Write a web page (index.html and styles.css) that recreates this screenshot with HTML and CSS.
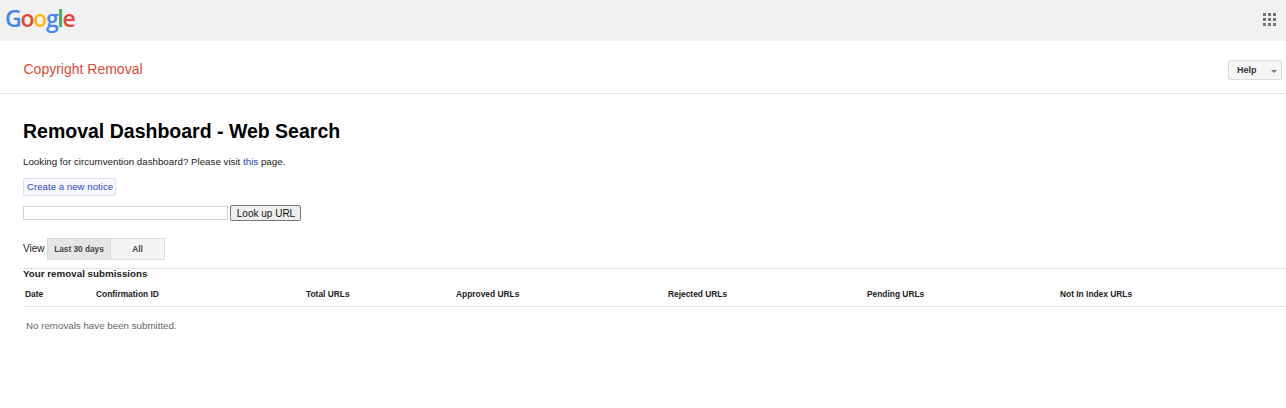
FILE: index.html
```html
<!DOCTYPE html>
<html lang="en">
<head>
<meta charset="utf-8">
<title>Removal Dashboard</title>
<link rel="stylesheet" href="styles.css">
</head>
<body>
<header class="topbar">
  <div class="logo"><span class="blue">G</span><span class="red">o</span><span class="yellow">o</span><span class="blue">g</span><span class="green">l</span><span class="red">e</span></div>
  <svg class="apps" width="13" height="13" viewBox="0 0 13 13" aria-hidden="true">
    <g fill="#757575">
      <rect x="0" y="0" width="3" height="3"/><rect x="5" y="0" width="3" height="3"/><rect x="10" y="0" width="3" height="3"/>
      <rect x="0" y="5" width="3" height="3"/><rect x="5" y="5" width="3" height="3"/><rect x="10" y="5" width="3" height="3"/>
      <rect x="0" y="10" width="3" height="3"/><rect x="5" y="10" width="3" height="3"/><rect x="10" y="10" width="3" height="3"/>
    </g>
  </svg>
</header>
<div class="subbar">
  <div class="product">Copyright Removal</div>
  <div class="help"><span>Help</span><i class="caret"></i></div>
</div>
<main class="content">
  <h1>Removal Dashboard - Web Search</h1>
  <p class="intro">Looking for circumvention dashboard? Please visit <a href="#">this</a> page.</p>
  <a class="notice" href="#">Create a new notice</a>
  <form class="lookup">
    <input class="url" type="text">
    <button class="lookbtn" type="button">Look up URL</button>
  </form>
  <div class="view">
    <span class="viewlabel">View</span>
    <div class="tabs">
      <div class="tab selected">Last 30 days</div>
      <div class="tab other">All</div>
    </div>
  </div>
  <h2>Your removal submissions</h2>
  <table class="subs">
    <colgroup>
      <col class="c1"><col class="c2"><col class="c3"><col class="c4"><col class="c5"><col class="c6"><col>
    </colgroup>
    <thead>
      <tr><th>Date</th><th>Confirmation ID</th><th>Total URLs</th><th>Approved URLs</th><th>Rejected URLs</th><th>Pending URLs</th><th>Not In Index URLs</th></tr>
    </thead>
  </table>
  <p class="empty">No removals have been submitted.</p>
</main>
</body>
</html>
```
FILE: styles.css
```css
* { box-sizing: border-box; }
html, body { margin: 0; padding: 0; }
body { font-family: "Liberation Sans", Arial, sans-serif; background: #fff; color: #000; font-size: 10px; height: 408px; overflow: hidden; }
.topbar { height: 41px; background: #f1f1f1; display: flex; align-items: center; justify-content: space-between; padding: 0 10px 0 5px; }
.logo { font-family: "Open Sans", sans-serif; font-size: 23px; line-height: 38px; letter-spacing: -1.3px; font-weight: 600; margin-bottom: 5px; }
.blue { color: #4285f4; }
.red { color: #ea4335; }
.yellow { color: #fbbc05; }
.green { color: #34a853; }
.apps { display: block; margin-bottom: 3px; }
.subbar { height: 53px; border-bottom: 1px solid #e5e5e5; display: flex; align-items: flex-start; justify-content: space-between; padding: 19px 4px 0 23.5px; }
.product { font-size: 14px; line-height: 18px; color: #dd4b39; }
.help { width: 54px; height: 20px; border: 1px solid #dcdcdc; border-radius: 2px; background: #f5f5f5; display: flex; align-items: center; justify-content: space-between; padding: 0 4px 0 8px; font-size: 9px; font-weight: bold; color: #333; }
.caret { width: 0; height: 0; border-left: 3px solid transparent; border-right: 3px solid transparent; border-top: 3px solid #777; margin-top: 2px; }
.content { padding: 0 0 0 23px; }
h1 { margin: 0; padding-top: 26px; font-size: 19.5px; line-height: 23px; font-weight: bold; }
.intro { margin: 12px 0 0; font-size: 9.75px; line-height: 14px; color: #222; }
.intro a { color: #1a3fb0; text-decoration: none; }
.notice { display: block; width: 93px; height: 18px; margin-top: 9px; border: 1px solid #dcdcf4; border-radius: 2px; background: #f8f8ff; color: #3449c4; font-size: 9.7px; line-height: 16px; padding-left: 3px; text-decoration: none; white-space: nowrap; }
.lookup { display: flex; align-items: center; gap: 2px; margin-top: 9px; height: 16px; }
.url { width: 205px; height: 14px; border: 1px solid #d4d4d4; padding: 0; margin: 0; background: #fff; }
.lookbtn { width: 71px; height: 16px; padding: 1px 0 0 1px; margin: 0; border: 1px solid #767676; border-radius: 2px; background: #efefef; font-family: "Liberation Sans", Arial, sans-serif; font-size: 10px; line-height: 13px; color: #111; }
.view { display: flex; align-items: center; gap: 2px; margin-top: 17px; height: 22px; font-size: 10px; color: #222; }
.viewlabel { width: 22px; margin-top: -2px; }
.tabs { display: flex; height: 22px; border: 1px solid #dcdcdc; background: #f5f5f5; font-size: 8.3px; font-weight: bold; color: #444; letter-spacing: -0.02px; }
.tab { display: flex; align-items: center; justify-content: center; }
.selected { width: 63px; background: #e6e6e6; border-right: 1px solid #dcdcdc; }
.other { width: 53px; }
h2 { margin: 8px 0 0; height: 11px; border-top: 1px solid #e5e5e5; font-size: 9.8px; line-height: 9px; font-weight: bold; color: #222; }
.subs { width: 100%; table-layout: fixed; border-collapse: collapse; border-bottom: 1px solid #e5e5e5; }
.subs th { height: 27px; padding: 3px 0 0 2px; text-align: left; font-size: 8.4px; font-weight: bold; color: #222; white-space: nowrap; }
.c1 { width: 71px; }
.c2 { width: 210px; }
.c3 { width: 150px; }
.c4 { width: 212px; }
.c5 { width: 199px; }
.c6 { width: 193px; }
.empty { margin: 13px 0 0 3px; font-size: 9.75px; line-height: 12px; color: #666; }
```
